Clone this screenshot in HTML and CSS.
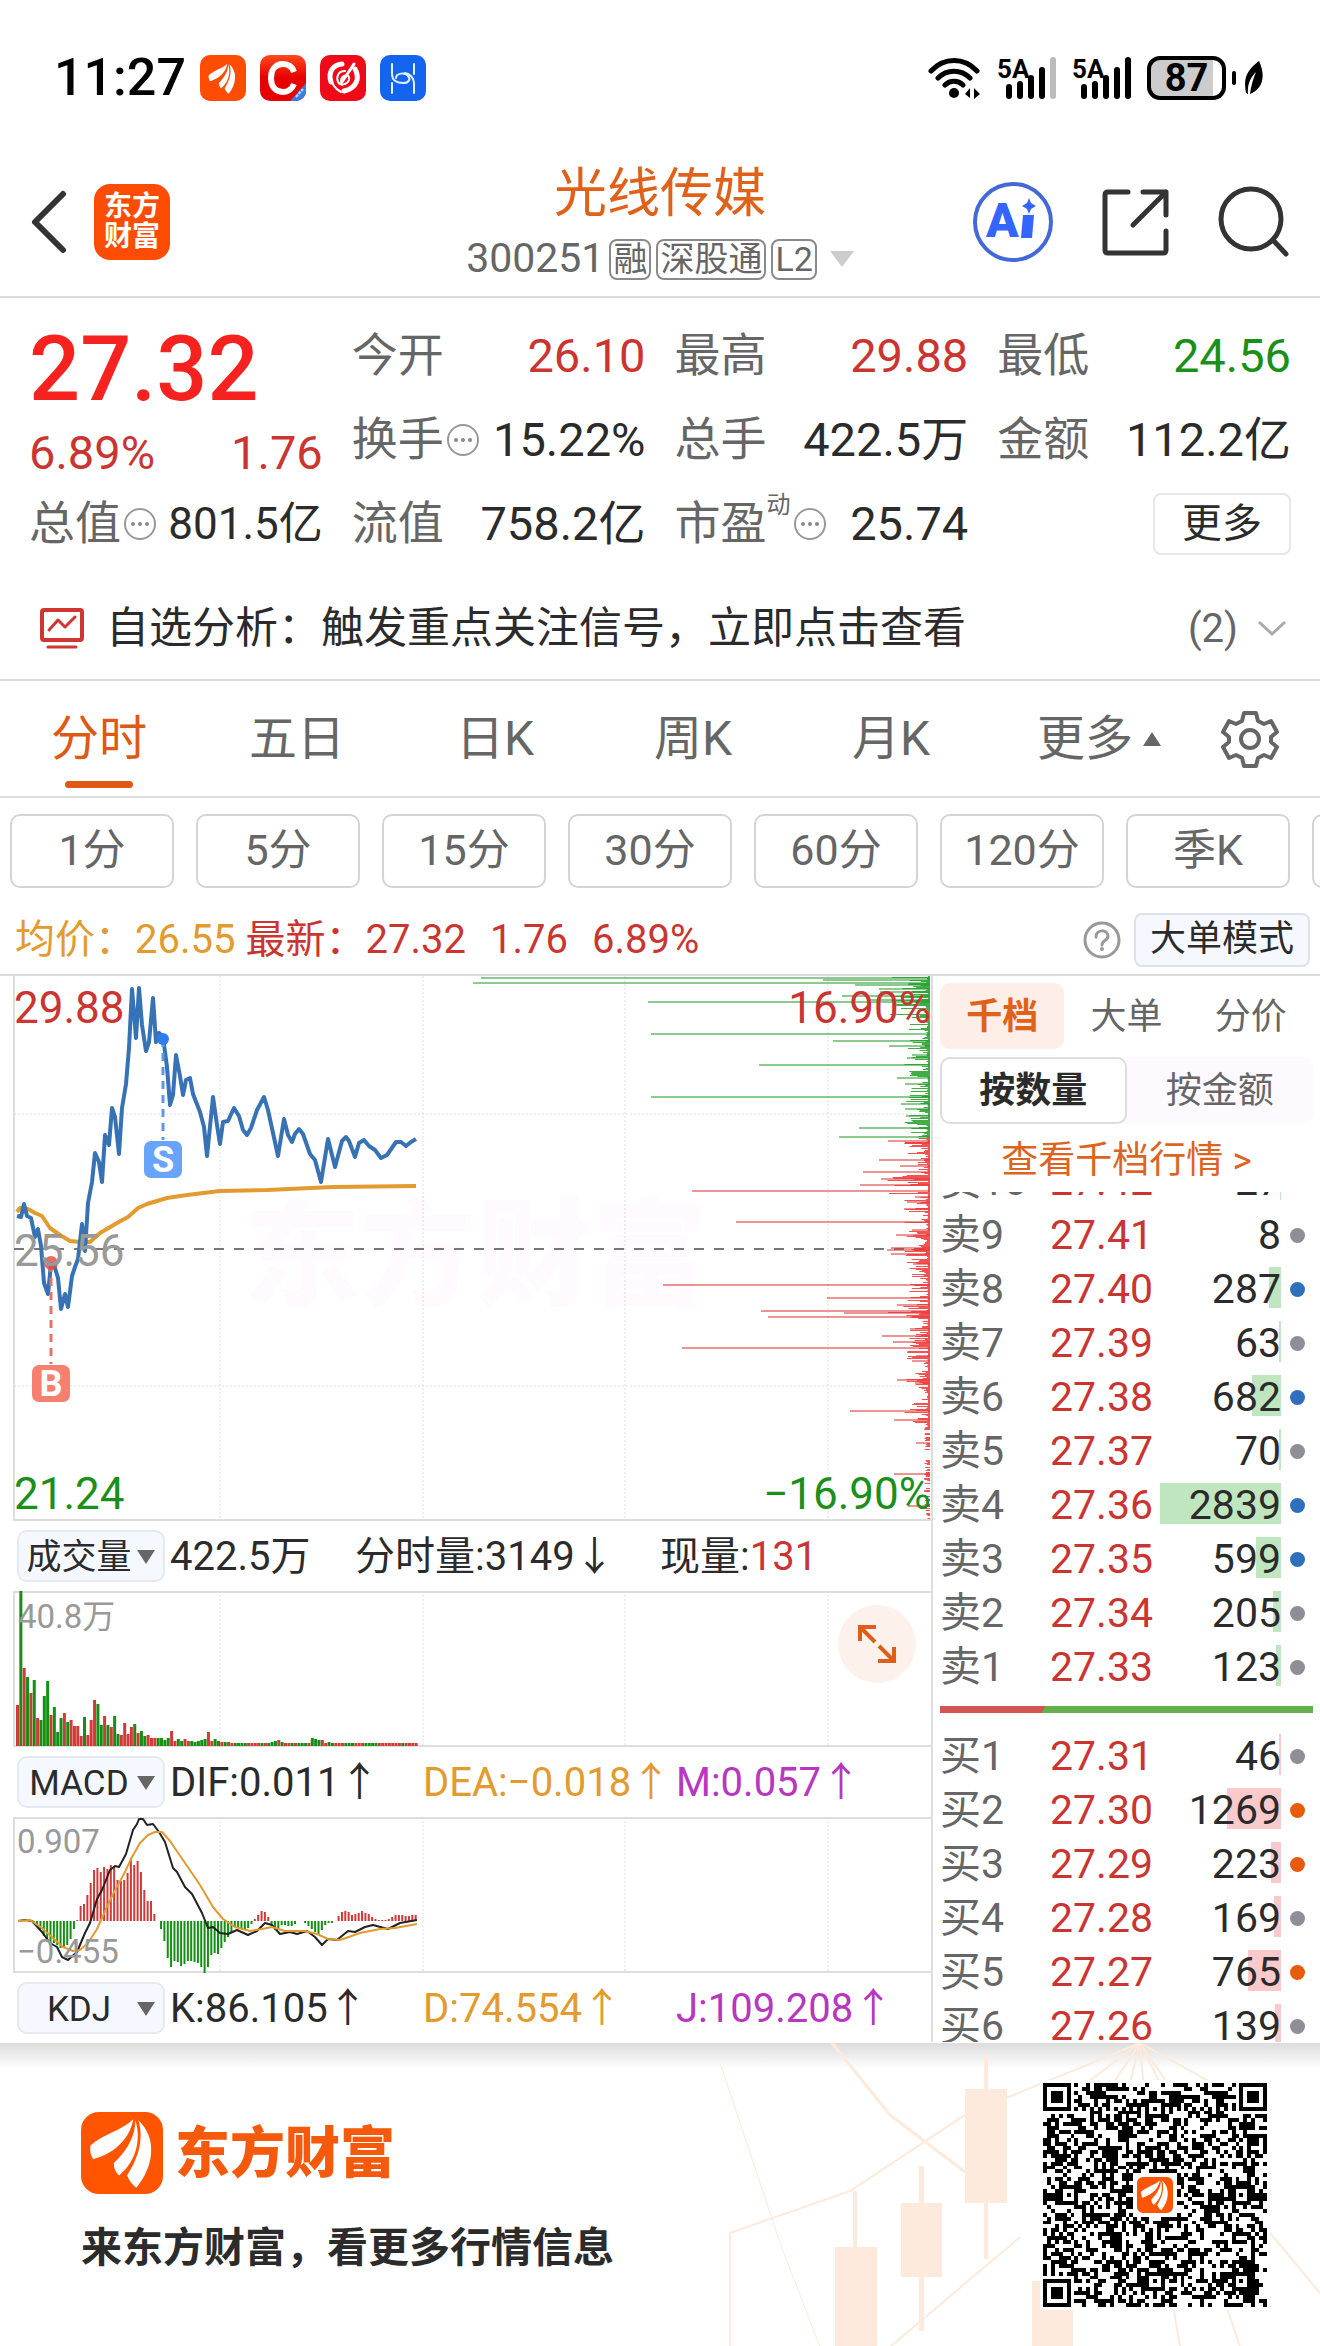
FILE: index.html
```html
<!DOCTYPE html>
<html lang="zh-CN">

<head>
    <meta charset="utf-8">
    <meta name="viewport" content="width=device-width, initial-scale=1">
    <title>光线传媒 300251</title>
    <link rel="stylesheet" href="styles.css">
</head>

<body>
    <svg class="defs" aria-hidden="true">
        <symbol id="feather" viewBox="0 0 80 80">
            <path d="M51 7C40 18 20 22 9 33c0 5 0 9 3 13 9-3 16-6 22-11C43 28 49 18 51 7z" />
            <path d="M53 8c0 15-7 28-21 42 0 5 2 9 5 12C51 51 60 30 53 8z" />
            <path d="M56 8c6 20-1 38-11 54 2 5 5 9 9 12C72 52 74 25 56 8z" />
        </symbol>
        <symbol id="dots" viewBox="0 0 34 34">
            <circle cx="17" cy="17" r="15" fill="none" stroke="#999" stroke-width="2" />
            <circle cx="10" cy="17" r="2" fill="#888" />
            <circle cx="17" cy="17" r="2" fill="#888" />
            <circle cx="24" cy="17" r="2" fill="#888" />
        </symbol>
    </svg>

    <div class="status-bar">
        <span class="clock">11:27</span>
        <div class="status-apps">
            <span class="app-icon app-em"><svg viewBox="0 0 80 80"><use href="#feather" x="8" y="10" width="62" height="62" /></svg></span>
            <span class="app-icon app-c">
                <svg viewBox="0 0 46 46">
                    <path d="M34 17c-2-6-6-8-11-8-8 0-12 6-12 14s4 14 12 14c5 0 9-3 11-8" fill="none" stroke="#fff" stroke-width="6" />
                    <path d="M46 28v18H30z" fill="#3b7de0" />
                    <path d="M36 42l7-8" stroke="#bcd6fb" stroke-width="2" stroke-dasharray="3 1" />
                </svg>
            </span>
            <span class="app-icon app-swirl">
                <svg viewBox="0 0 46 46" fill="none" stroke="#fff" stroke-linecap="round">
                    <path d="M22 9C12 10 8 18 11 27" stroke-width="5" />
                    <path d="M11 22c0 6 4 12 10 15" stroke-width="2" />
                    <path d="M35 14c5 9 2 19-11 22" stroke-width="5" />
                    <path d="M34 9L22 27" stroke-width="3" />
                    <path d="M25 16c-7 0-9 6-7 11 2 4 9 3 11-2 1-4-2-6-5-4-4 2-3 7-2 9" stroke-width="2" />
                </svg>
            </span>
            <span class="app-icon app-h">
                <svg viewBox="0 0 46 46" fill="none" stroke="#dff3ff" stroke-width="2" stroke-linecap="round">
                    <path d="M12 9v10c0 7 6 9 11 9 6 0 8-4 5-7-3-4-12-3-12 2" />
                    <path d="M12 38V28M34 9v10M34 38V28c0-5-4-9-9-10" />
                </svg>
            </span>
        </div>
        <div class="status-right">
            <svg width="54" height="44" viewBox="0 0 54 44" fill="none" stroke="#000" stroke-width="5" stroke-linecap="round">
                <path d="M3 15C16 1 36 1 49 15M10 22c9-9 23-9 32 0M17 29c5-5 13-5 18 0" />
                <circle cx="26" cy="37" r="5" fill="#000" stroke="none" />
                <path d="M37 38l5-6v10M46 43V32l6 6z" fill="#000" stroke="none" />
            </svg>
            <svg width="60" height="44" viewBox="0 0 60 44">
                <text x="0" y="22" class="net-label">5A</text>
                <path d="M12 31v9M23 28v12M34 22v18M45 14v26" stroke="#000" stroke-width="6" stroke-linecap="round" />
                <path d="M56 4v36" stroke="#bbb" stroke-width="6" stroke-linecap="round" />
            </svg>
            <svg width="60" height="44" viewBox="0 0 60 44">
                <text x="0" y="22" class="net-label">5A</text>
                <path d="M12 31v9M23 28v12M34 22v18M45 14v26M56 4v36" stroke="#000" stroke-width="6" stroke-linecap="round" />
            </svg>
            <span class="battery">87</span>
            <svg width="34" height="44" viewBox="0 0 34 44">
                <path d="M4 17v10" stroke="#000" stroke-width="4" stroke-linecap="round" />
                <path d="M29 5C17 14 13 22 16 37l2 1c-1-10 3-17 8-22-3 7-5 14-6 22 11-4 17-16 9-33z" />
            </svg>
        </div>
    </div>

    <header class="stock-header">
        <div class="header-side">
            <button class="icon-button" aria-label="返回">
                <svg width="40" height="66" viewBox="0 0 40 66" fill="none" stroke="#333" stroke-width="6" stroke-linecap="round" stroke-linejoin="round"><path d="M33 5L5 33l28 28" /></svg>
            </button>
            <a class="brand-badge" href="#">东方<br>财富</a>
        </div>
        <div class="header-title">
            <h1>光线传媒</h1>
            <div class="stock-code">
                <span>300251</span>
                <span class="tag">融</span>
                <span class="tag">深股通</span>
                <span class="tag">L2</span>
                <i class="code-arrow"></i>
            </div>
        </div>
        <div class="header-side header-actions">
            <button class="icon-button" aria-label="AI">
                <svg width="82" height="82" viewBox="0 0 82 82">
                    <circle cx="41" cy="41" r="38" fill="none" stroke="#4468d8" stroke-width="4" />
                    <text x="14" y="56" class="ai-label">A</text>
                    <path d="M51 34h11l-2 23H49z" fill="#3465ff" />
                    <path d="M57 17l2 5 5 3-5 3-2 5-2-5-5-3 5-3z" fill="#3465ff" />
                </svg>
            </button>
            <button class="icon-button" aria-label="分享">
                <svg width="70" height="70" viewBox="0 0 70 70" fill="none" stroke="#333" stroke-width="5" stroke-linecap="round" stroke-linejoin="round"><path d="M28 5H8q-3 0-3 3v55q0 3 3 3h55q3 0 3-3V44M43 5h23v23M66 5L33 38" /></svg>
            </button>
            <button class="icon-button" aria-label="搜索">
                <svg width="74" height="74" viewBox="0 0 74 74" fill="none" stroke="#333" stroke-width="5" stroke-linecap="round"><circle cx="35" cy="34" r="30" /><path d="M57 55l13 14" /></svg>
            </button>
        </div>
    </header>

    <main>
        <section class="quote">
            <div class="price-box">
                <div class="price">27.32</div>
                <div class="change"><span>6.89%</span><span>1.76</span></div>
            </div>
            <div class="cell"><span class="key">今开</span><span class="value up">26.10</span></div>
            <div class="cell"><span class="key">最高</span><span class="value up">29.88</span></div>
            <div class="cell"><span class="key">最低</span><span class="value down">24.56</span></div>
            <div class="cell"><span class="key">换手<svg class="dots"><use href="#dots" /></svg></span><span class="value">15.22%</span></div>
            <div class="cell"><span class="key">总手</span><span class="value">422.5万</span></div>
            <div class="cell"><span class="key">金额</span><span class="value">112.2亿</span></div>
            <div class="cell"><span class="key">总值<svg class="dots"><use href="#dots" /></svg></span><span class="value value-small">801.5亿</span></div>
            <div class="cell"><span class="key">流值</span><span class="value">758.2亿</span></div>
            <div class="cell"><span class="key">市盈<sup>动</sup><svg class="dots"><use href="#dots" /></svg></span><span class="value">25.74</span></div>
            <div class="cell cell-more"><button class="more-button">更多</button></div>
        </section>

        <a class="analysis" href="#">
            <svg width="44" height="42" viewBox="0 0 44 42" fill="none" stroke="#cf3632" stroke-width="4" stroke-linejoin="round" stroke-linecap="round"><rect x="2" y="2" width="40" height="30" rx="2" /><path d="M9 22l9-10 7 7 10-10" stroke-width="3" /><path d="M8 39h28" stroke-width="3" /></svg>
            <span class="analysis-text">自选分析：触发重点关注信号，立即点击查看</span>
            <span class="analysis-count">(2)</span>
            <svg width="28" height="18" viewBox="0 0 28 18" fill="none" stroke="#aaa" stroke-width="3"><path d="M1 2l13 12L27 2" /></svg>
        </a>

        <nav class="tabs">
            <button class="tab active">分时</button>
            <button class="tab">五日</button>
            <button class="tab">日K</button>
            <button class="tab">周K</button>
            <button class="tab">月K</button>
            <button class="tab">更多<i class="tab-arrow"></i></button>
            <button class="tab tab-gear" aria-label="设置">
                <svg width="58" height="58" viewBox="0 0 58 58" fill="none" stroke="#666" stroke-width="4" stroke-linejoin="round">
                    <path d="M23 3h12l2 8 6 3 7-3 6 11-6 5v5l6 5-6 11-7-3-6 3-2 8H23l-2-8-6-3-7 3-6-11 6-5v-5l-6-5 6-11 7 3 6-3z" />
                    <circle cx="29" cy="29" r="9" />
                </svg>
            </button>
        </nav>

        <div class="periods">
            <button>1分</button>
            <button>5分</button>
            <button>15分</button>
            <button>30分</button>
            <button>60分</button>
            <button>120分</button>
            <button>季K</button>
            <button aria-label="更多周期"></button>
        </div>

        <div class="summary">
            <span class="avg">均价：26.55</span>
            <span class="up latest"><span>最新：27.32</span><span>1.76</span><span>6.89%</span></span>
            <button class="icon-button" aria-label="帮助">
                <svg width="38" height="38" viewBox="0 0 38 38" fill="none" stroke="#999" stroke-width="3"><circle cx="19" cy="19" r="17" /><path d="M13 16c0-8 12-8 12-1 0 5-6 4-6 9" stroke-linecap="round" /><circle cx="19" cy="28" r="2" fill="#999" stroke="none" /></svg>
            </button>
            <button class="mode-button">大单模式</button>
        </div>

        <div class="board">
            <section class="charts">
                <svg class="chart" viewBox="0 0 931 545">
                    <text x="244" y="320" class="watermark">东方财富</text>
                    <path class="grid" d="M220 0v545M423 0v545M625 0v545M828 0v545M14 138h916M14 410h916" />
                    <path class="frame" d="M14 0v544h917" />
                    <path d="M14 273h916" stroke="#777" stroke-width="2" stroke-dasharray="10 10" />
                    <g id="depth"></g>
                    <polyline class="avg-line" points="17,236 20,232 28,233 35,237 42,240 50,252 60,259 70,265 80,266 90,266 100,257 117,247 128,241 138,232 147,228 167,222 187,219 220,215 267,214 333,211 416,210" />
                    <polyline class="price-line" points="17,240 21,241 24,228 27,240 31,242 35,261 38,253 41,270 44,307 48,318 51,288 55,292 58,302 61,333 65,318 68,331 72,300 75,291 78,283 82,248 85,275 88,227 92,206 95,177 99,186 102,206 105,159 109,169 112,132 115,141 119,178 122,132 126,108 129,72 132,13 136,62 139,12 142,49 146,75 149,66 153,22 156,66 159,57 163,61 167,91 170,129 173,119 176,79 180,100 183,119 186,104 190,102 193,118 200,136 204,151 207,180 213,121 217,149 220,168 223,146 228,145 234,132 239,140 243,154 247,159 251,152 257,134 264,121 268,134 278,180 284,143 288,159 292,166 295,158 299,153 303,158 310,178 315,184 321,206 328,163 335,191 342,165 346,161 349,165 355,181 359,167 364,164 369,170 375,174 381,182 387,179 396,166 401,166 406,170 411,166 416,163" />
                    <path d="M163 63v101" stroke="#5c98e8" stroke-width="3" stroke-dasharray="8 6" />
                    <circle cx="163" cy="63" r="6" fill="#2f7cf0" />
                    <path d="M51 288v100" stroke="#e27468" stroke-width="3" stroke-dasharray="8 6" />
                    <circle cx="51" cy="287" r="7" fill="#e2473f" opacity=".8" />
                    <rect x="144" y="165" width="38" height="37" rx="7" fill="#69a4fb" />
                    <text x="163" y="196" class="mark">S</text>
                    <rect x="32" y="389" width="38" height="37" rx="7" fill="#f6806f" />
                    <text x="51" y="420" class="mark">B</text>
                    <text x="14" y="47" class="axis axis-up">29.88</text>
                    <text x="14" y="290" class="axis axis-mid">25.56</text>
                    <text x="14" y="533" class="axis axis-down">21.24</text>
                    <text x="931" y="47" class="axis axis-up axis-end">16.90%</text>
                    <text x="931" y="533" class="axis axis-down axis-end">−16.90%</text>
                </svg>

                <div class="indicator">
                    <label class="picker"><select aria-label="成交量指标"><option>成交量</option></select></label>
                    <div class="readings readings-vol">
                        <span>422.5万</span><span>分时量:3149↓</span><span>现量:<span class="up">131</span></span>
                    </div>
                </div>
                <div class="chart-box">
                    <svg class="chart" viewBox="0 0 931 156">
                        <path class="grid" d="M220 0v156M423 0v156M625 0v156M828 0v156" />
                        <path class="frame" d="M931 1H14v154h917" />
                        <g id="volume"></g>
                        <text x="18" y="37" class="scale">40.8万</text>
                    </svg>
                    <button class="expand" aria-label="放大">
                        <svg width="40" height="40" viewBox="0 0 40 40" fill="none" stroke="#dd5f1c" stroke-width="4"><path d="M3 17V3h16M4 4l14 14M37 23v14H21M36 36L22 22" /></svg>
                    </button>
                </div>

                <div class="indicator">
                    <label class="picker"><select aria-label="MACD指标"><option>MACD</option></select></label>
                    <div class="readings">
                        <span>DIF:0.011↑</span><span class="avg">DEA:−0.018↑</span><span class="purple">M:0.057↑</span>
                    </div>
                </div>
                <svg class="chart" viewBox="0 0 931 156">
                    <path class="grid" d="M220 0v156M423 0v156M625 0v156M828 0v156" />
                    <path class="frame" d="M931 1H14v154h917" />
                    <g id="macd"></g>
                    <polyline class="thin" stroke="#222" points="18,104 25,103 32,104 42,115 50,126 57,130 62,140 68,143 77,135 85,116 90,106 97,82 102,73 110,53 115,49 119,50 126,37 133,13 137,7 139,2 143,2 147,8 153,7 159,15 165,25 173,51 177,55 185,70 192,77 202,96 208,111 213,110 220,116 228,117 237,113 248,118 257,114 265,106 272,108 280,117 290,115 297,117 307,114 315,120 322,128 328,122 337,123 348,114 355,115 365,110 373,108 388,112 400,106 417,103" />
                    <polyline class="thin" stroke="#e39a2e" points="18,104 30,103 42,111 53,121 63,130 73,134 80,133 88,126 97,112 106,92 114,75 124,57 132,40 140,26 148,18 155,15 162,15 170,24 183,43 200,68 213,90 223,102 235,110 250,114 262,112 272,110 285,114 305,114 317,117 328,122 340,123 360,116 380,112 395,111 417,107" />
                    <text x="17" y="36" class="scale">0.907</text>
                    <text x="17" y="146" class="scale">−0.455</text>
                </svg>

                <div class="indicator">
                    <label class="picker"><select aria-label="KDJ指标"><option>KDJ</option></select></label>
                    <div class="readings">
                        <span>K:86.105↑</span><span class="avg">D:74.554↑</span><span class="purple">J:109.208↑</span>
                    </div>
                </div>
            </section>

            <aside class="orders">
                <div class="order-tabs">
                    <button class="active">千档</button>
                    <button>大单</button>
                    <button>分价</button>
                </div>
                <div class="order-switch">
                    <button class="active">按数量</button>
                    <button>按金额</button>
                </div>
                <a class="order-link" href="#">查看千档行情 &gt;</a>
                <div class="book">
                    <table class="sells">
                        <tr><th>卖10</th><td class="up">27.42</td><td class="qty"><i style="width: 1%"></i>27</td><td><b class="dot"></b></td></tr>
                        <tr><th>卖9</th><td class="up">27.41</td><td class="qty">8</td><td><b class="dot"></b></td></tr>
                        <tr><th>卖8</th><td class="up">27.40</td><td class="qty"><i style="width: 10%"></i>287</td><td><b class="dot blue"></b></td></tr>
                        <tr><th>卖7</th><td class="up">27.39</td><td class="qty"><i style="width: 2%"></i>63</td><td><b class="dot"></b></td></tr>
                        <tr><th>卖6</th><td class="up">27.38</td><td class="qty"><i style="width: 24%"></i>682</td><td><b class="dot blue"></b></td></tr>
                        <tr><th>卖5</th><td class="up">27.37</td><td class="qty"><i style="width: 2%"></i>70</td><td><b class="dot"></b></td></tr>
                        <tr><th>卖4</th><td class="up">27.36</td><td class="qty"><i style="width: 100%"></i>2839</td><td><b class="dot blue"></b></td></tr>
                        <tr><th>卖3</th><td class="up">27.35</td><td class="qty"><i style="width: 21%"></i>599</td><td><b class="dot blue"></b></td></tr>
                        <tr><th>卖2</th><td class="up">27.34</td><td class="qty"><i style="width: 7%"></i>205</td><td><b class="dot"></b></td></tr>
                        <tr><th>卖1</th><td class="up">27.33</td><td class="qty"><i style="width: 4%"></i>123</td><td><b class="dot"></b></td></tr>
                    </table>
                    <div class="ratio"></div>
                    <table class="buys">
                        <tr><th>买1</th><td class="up">27.31</td><td class="qty"><i style="width: 2%"></i>46</td><td><b class="dot"></b></td></tr>
                        <tr><th>买2</th><td class="up">27.30</td><td class="qty"><i style="width: 45%"></i>1269</td><td><b class="dot orange"></b></td></tr>
                        <tr><th>买3</th><td class="up">27.29</td><td class="qty"><i style="width: 8%"></i>223</td><td><b class="dot orange"></b></td></tr>
                        <tr><th>买4</th><td class="up">27.28</td><td class="qty"><i style="width: 6%"></i>169</td><td><b class="dot"></b></td></tr>
                        <tr><th>买5</th><td class="up">27.27</td><td class="qty"><i style="width: 27%"></i>765</td><td><b class="dot orange"></b></td></tr>
                        <tr><th>买6</th><td class="up">27.26</td><td class="qty"><i style="width: 5%"></i>139</td><td><b class="dot"></b></td></tr>
                    </table>
                </div>
            </aside>
        </div>
    </main>

    <footer class="promo">
        <svg class="promo-bg" viewBox="0 0 620 304" aria-hidden="true">
            <g fill="none" stroke="#fdeadb" stroke-width="3">
                <path d="M132 0l58 72 75 57" />
                <path d="M20 20l60 180 40 104" stroke-width="1" />
                <path d="M30 190l120-42 115-76 175-72M190 304l130-110" stroke-width="2" />
                <path d="M30 304V190M440 0l-80 60M440 0l-40 60M440 0l-15 60M440 0l5 60M440 0l30 60M440 0l90 50M440 0l130 190 50 60M480 304l-10-60M540 304l-20-60" stroke-width="2" />
            </g>
            <g fill="#fdeadd">
                <path d="M265 46h42v114h-42zM284 13h4v203h-4zM201 160h41v74h-41zM219 123h5v165h-5zM135 204h42v100h-42zM153 148h4v60h-4zM332 238h41v66h-41zM350 140h4v100h-4z" />
            </g>
        </svg>
        <div class="promo-text">
            <div class="promo-logo">
                <span class="logo-mark"><svg viewBox="0 0 80 80"><use href="#feather" /></svg></span>
                <span class="logo-name">东方财富</span>
            </div>
            <p>来东方财富，看更多行情信息</p>
        </div>
        <div class="qr">
            <svg id="qr" viewBox="0 0 57 57" role="img" aria-label="二维码"></svg>
            <span class="logo-mark"><svg viewBox="0 0 80 80"><use href="#feather" /></svg></span>
        </div>
    </footer>
    <script src="charts.js"></script>
</body>

</html>
```

FILE: styles.css
```css
* {
    box-sizing: border-box;
}

body {
    margin: 0;
    background: #fff;
    color: #2b2b2b;
    font-family: Roboto, "Noto Sans CJK SC", sans-serif;
    font-size: 40px;
    line-height: 1.2;
}

button,
select {
    margin: 0;
    padding: 0;
    border: 0;
    background: none;
    color: inherit;
    font: inherit;
}

a {
    color: inherit;
    text-decoration: none;
}

svg {
    display: block;
    flex: none;
}

.defs {
    position: absolute;
    width: 0;
    height: 0;
}

.up {
    color: #cb3531;
}

.down {
    color: #1a8f1a;
}

.avg {
    color: #e39a2e;
}

.purple {
    color: #b936c0;
}

.icon-button {
    display: flex;
}

/* status bar */
.status-bar {
    display: flex;
    align-items: center;
    height: 156px;
    padding: 0 56px 0 54px;
}

.clock {
    width: 146px;
    font-size: 52px;
    font-weight: 500;
    color: #000;
}

.status-apps {
    display: flex;
    gap: 14px;
    flex: 1;
}

.app-icon {
    width: 46px;
    height: 46px;
    border-radius: 10px;
    overflow: hidden;
}

.app-em {
    background: #ff4c05;
    fill: #fff;
}

.app-c {
    background: linear-gradient(#ff4a1c, #e60000 50%);
}

.app-swirl {
    background: #f00918;
}

.app-h {
    background: #1464f0;
}

.status-right {
    display: flex;
    align-items: center;
    gap: 15px;
}

.net-label {
    font-size: 26px;
    font-weight: 700;
}

.battery {
    width: 79px;
    height: 44px;
    border: 4px solid #000;
    border-radius: 13px;
    background: linear-gradient(90deg, #ccc 88%, #fff 88%);
    color: #000;
    font-size: 38px;
    font-weight: 700;
    line-height: 37px;
    text-align: center;
}

.battery + svg {
    margin-left: -11px;
}

/* stock header */
.stock-header {
    display: grid;
    grid-template-columns: 1fr auto 1fr;
    align-items: center;
    height: 142px;
    padding: 0 30px 8px;
    border-bottom: 2px solid #ddd;
}

.header-side {
    display: flex;
    align-items: center;
    gap: 24px;
}

.header-actions {
    justify-content: flex-end;
    gap: 46px;
}

.brand-badge {
    width: 76px;
    height: 76px;
    padding-top: 8px;
    border-radius: 16px;
    background: #ff4c05;
    color: #fff;
    font-size: 28px;
    font-weight: 700;
    line-height: 30px;
    text-align: center;
}

.header-title h1 {
    margin: 0;
    color: #e0611a;
    font-size: 53px;
    font-weight: 400;
    line-height: 74px;
    text-align: center;
}

.stock-code {
    display: flex;
    align-items: center;
    gap: 5px;
    height: 56px;
    color: #666;
    font-size: 41px;
}

.tag {
    padding: 0 2px;
    border: 2px solid #8a8a8a;
    border-radius: 8px;
    font-size: 34px;
    line-height: 37px;
}

.code-arrow {
    margin-left: 8px;
    border: 12px solid transparent;
    border-top: 16px solid #ccc;
    border-bottom: 0;
}

.ai-label {
    fill: #3465ff;
    font-size: 48px;
    font-weight: 900;
}

/* quote figures */
.quote {
    display: grid;
    grid-template-columns: repeat(4, 1fr);
    grid-auto-rows: 84px;
    column-gap: 29px;
    padding: 16px 29px 12px;
    font-size: 46px;
}

.price-box {
    grid-row: span 2;
    padding-top: 4px;
}

.price {
    color: #f5221f;
    font-size: 90px;
    font-weight: 500;
    line-height: 104px;
}

.change {
    display: flex;
    justify-content: space-between;
    color: #cb3531;
    font-size: 47px;
    line-height: 62px;
}

.cell {
    display: flex;
    align-items: center;
    justify-content: space-between;
    white-space: nowrap;
}

.key {
    display: flex;
    align-items: center;
    color: #666;
}

.key sup {
    align-self: flex-start;
    font-size: 24px;
    line-height: 18px;
}

.value {
    font-size: 47px;
}

.value-small {
    font-size: 44px;
}

.dots {
    width: 34px;
    height: 34px;
    margin-left: 2px;
}

.cell-more {
    justify-content: flex-end;
}

.more-button {
    width: 138px;
    height: 62px;
    border: 2px solid #e8e8e8;
    border-radius: 8px;
    font-size: 40px;
}

.analysis {
    display: flex;
    align-items: center;
    height: 103px;
    padding: 0 34px 0 40px;
    border-bottom: 2px solid #ddd;
}

.analysis-text {
    flex: 1;
    margin-left: 22px;
    font-size: 43px;
}

.analysis-count {
    margin-right: 20px;
    color: #666;
}

/* chart period tabs */
.tabs {
    display: grid;
    grid-template-columns: repeat(5, 10fr) 11fr 84px;
    height: 117px;
    padding-right: 28px;
    border-bottom: 2px solid #ddd;
    color: #666;
    font-size: 48px;
}

.tab {
    position: relative;
    display: flex;
    align-items: center;
    justify-content: center;
}

.tab.active {
    color: #de5a14;
}

.tab.active::after {
    content: "";
    position: absolute;
    bottom: 8px;
    width: 68px;
    height: 7px;
    border-radius: 4px;
    background: #de5a14;
}

.tab-arrow {
    margin-left: 10px;
    border: 9px solid transparent;
    border-top: 0;
    border-bottom: 14px solid #666;
}

.periods {
    display: flex;
    gap: 22px;
    padding: 16px 10px 0;
    overflow: hidden;
    color: #666;
    font-size: 43px;
}

.periods button {
    flex: none;
    width: 164px;
    height: 74px;
    border: 2px solid #d4d4d4;
    border-radius: 10px;
}

.summary {
    display: flex;
    align-items: center;
    height: 88px;
    padding: 18px 10px 0 15px;
    border-bottom: 2px solid #ddd;
    font-size: 40px;
}

.latest {
    display: flex;
    gap: 24px;
    flex: 1;
    margin-left: 10px;
}

.mode-button {
    width: 176px;
    height: 54px;
    margin-left: 13px;
    border: 2px solid #dde1e8;
    border-radius: 8px;
    background: #f5f9ff;
    font-size: 36px;
}

/* charts */
.board {
    display: grid;
    grid-template-columns: 931fr 389fr;
    align-items: start;
}

.chart {
    width: 100%;
    height: auto;
}

.chart-box {
    position: relative;
}

.grid {
    fill: none;
    stroke: #ddd;
    stroke-dasharray: 2 2;
}

.frame {
    fill: none;
    stroke: #ddd;
    stroke-width: 2;
}

.watermark {
    fill: #fffafe;
    font-size: 116px;
    font-weight: 900;
}

.price-line,
.avg-line,
.thin {
    fill: none;
    stroke-width: 4;
    stroke-linejoin: round;
}

.price-line {
    stroke: #3672b4;
}

.avg-line {
    stroke: #e39a2e;
}

.thin {
    stroke-width: 2;
}

.mark {
    fill: #fff;
    font-size: 36px;
    font-weight: 700;
    text-anchor: middle;
}

.axis {
    font-size: 44px;
}

.axis-up {
    fill: #cb3531;
}

.axis-mid {
    fill: #999;
}

.axis-down {
    fill: #1a8f1a;
}

.axis-end {
    text-anchor: end;
}

.scale {
    fill: #999;
    font-size: 33px;
}

.expand {
    position: absolute;
    top: 14px;
    right: 15px;
    display: flex;
    align-items: center;
    justify-content: center;
    width: 78px;
    height: 78px;
    border-radius: 50%;
    background: #fdf1ec;
}

.indicator {
    display: flex;
    align-items: center;
    height: 70px;
    padding-left: 17px;
}

.picker {
    position: relative;
    width: 148px;
    height: 52px;
    border: 2px solid #e6e9ef;
    border-radius: 10px;
    background: #f5f9ff;
}

.picker select {
    width: 100%;
    height: 100%;
    padding-right: 24px;
    appearance: none;
    font-size: 35px;
    text-align-last: center;
}

.picker::after {
    content: "";
    position: absolute;
    top: 18px;
    right: 8px;
    border: 9px solid transparent;
    border-top: 14px solid #666;
    border-bottom: 0;
}

.readings {
    display: grid;
    grid-template-columns: 253px 253px 1fr;
    flex: 1;
    padding: 2px 0 0 5px;
    white-space: nowrap;
}

.readings-vol {
    grid-template-columns: 185px 305px 1fr;
}

/* order book */
.orders {
    display: flex;
    flex-direction: column;
    height: 1066px;
    padding: 7px 7px 0;
    border-left: 2px solid #ddd;
    color: #666;
    font-size: 36px;
}

.orders button {
    padding-top: 3px;
}

.order-tabs {
    display: grid;
    grid-template-columns: repeat(3, 1fr);
    height: 66px;
}

.order-tabs .active {
    border-radius: 10px;
    background: #fdeee7;
    color: #e0611a;
    font-weight: 700;
}

.order-switch {
    display: grid;
    grid-template-columns: 1fr 1fr;
    height: 67px;
    margin-top: 8px;
    border-radius: 10px;
    background: #fdf9fe;
}

.order-switch .active {
    border: 2px solid #ddd;
    border-radius: 10px;
    background: #fff;
    color: #2b2b2b;
    font-weight: 700;
}

.order-link {
    height: 68px;
    color: #dd6420;
    font-size: 37px;
    line-height: 74px;
    text-align: center;
}

.book {
    flex: 1;
    min-height: 0;
    overflow: hidden;
    font-size: 41px;
}

.book table {
    width: 100%;
    border-collapse: collapse;
    table-layout: fixed;
    line-height: 54px;
}

/* the list is scrolled, so its top row is cut */
.sells {
    margin-top: -38px;
}

.book th,
.book td {
    width: 110px;
    height: 54px;
    padding: 0;
    font-weight: 400;
    text-align: left;
}

.book td:nth-child(3) {
    width: auto;
}

.book td:last-child {
    width: 32px;
}

.book .qty {
    position: relative;
    color: #2b2b2b;
    text-align: right;
}

.qty i {
    position: absolute;
    top: 5px;
    right: 0;
    z-index: -1;
    height: 41px;
    background: #c0e6c0;
}

.buys .qty i {
    background: #fac9cc;
}

.dot {
    display: block;
    width: 15px;
    height: 15px;
    margin: 0 auto;
    border-radius: 50%;
    background: #8e8e96;
}

.dot.blue {
    background: #2f70bd;
}

.dot.orange {
    background: #e85a0c;
}

.ratio {
    height: 7px;
    margin: 12px 0 16px;
    background: linear-gradient(120deg, #d25552 28%, #64b04e 28%);
}

/* footer */
.promo {
    position: relative;
    display: flex;
    align-items: center;
    justify-content: space-between;
    height: 304px;
    padding: 0 50px 0 81px;
    background: linear-gradient(#dcdcdc, #fff 26px);
}

.promo-bg {
    position: absolute;
    top: 0;
    right: 0;
    height: 100%;
}

.promo-text {
    position: relative;
}

.promo-logo {
    display: flex;
    align-items: center;
    gap: 12px;
}

.logo-mark {
    display: block;
    width: 82px;
    height: 82px;
    border-radius: 18px;
    background: #ff5500;
    fill: #fff;
}

.logo-name {
    color: #f5590c;
    font-size: 55px;
    font-weight: 900;
    line-height: 84px;
}

.promo-text p {
    margin: 22px 0 0;
    font-size: 41px;
    font-weight: 700;
    line-height: 62px;
}

.qr {
    position: relative;
    width: 230px;
    padding: 3px;
    background: #fff;
}

.qr .logo-mark {
    position: absolute;
    top: 95px;
    left: 95px;
    width: 40px;
    height: 40px;
    border: 2px solid #fff;
    border-radius: 8px;
}
```

FILE: charts.js
```js
var RED = "#d23a3a";
var GREEN = "#139013";
var STEP = 3.35;

function bar(x, y, w, h, color, opacity) {
    return '<rect x="' + x + '" y="' + y + '" width="' + w + '" height="' + h + '" fill="' + color + '" opacity="' + (opacity || 1) + '"/>';
}

function fill(id, html) {
    document.getElementById(id).innerHTML = html;
}

var seed = 7;
function rand() {
    seed = (seed * 16807) % 2147483647;
    return seed / 2147483647;
}

// resting orders by price: [y, left edge]
var orders = [
    [1, 481], [3, 823], [6, 473], [8, 855], [12, 879], [15, 880], [19, 842], [23, 870], [25, 648], [57, 651], [64, 833], [69, 889],
    [78, 912], [81, 907], [88, 759], [101, 897], [107, 905], [120, 651], [127, 901], [132, 905], [139, 906], [151, 859], [160, 839],
    [164, 888], [166, 905], [183, 879], [189, 900], [195, 863], [202, 881], [208, 860], [214, 692], [220, 915], [225, 907], [232, 904],
    [245, 736], [253, 912], [258, 896], [271, 891], [273, 887], [277, 891], [287, 913], [308, 663], [321, 827], [328, 897], [334, 761],
    [336, 844], [340, 768], [352, 910], [359, 882], [365, 893], [371, 682], [379, 916], [384, 912], [403, 897], [406, 915],
    [434, 850], [443, 894], [466, 916], [497, 894], [529, 908]
];

function drawDepth() {
    var html = "";
    orders.forEach(function (o) {
        html += bar(o[1], o[0], 930 - o[1], 2, o[0] < 162 ? "#2f9e33" : "#df3d3d", 0.55);
    });
    for (var y = 0; y < 543; y += 1) {
        var dense = y < 40 || (y > 196 && y < 220) || (y > 325 && y < 345);
        var w = 2 + Math.pow(rand(), 3) * (dense ? 46 : 24);
        if (y > 450) {
            w = rand() > 0.5 ? 2 + rand() * 4 : 0;
        }
        html += bar(930 - w, y, w, 1, y < 162 ? "#1fa024" : "#f03434", 0.85);
    }
    fill("depth", html);
}

// negative value: the minute closed lower
var volume = [
    41, -155, 78, -69, 53, -66, 28, -26, -50, -65, 31, -39, -14, -28, 33, -24, 26, 20, 20, 10, -29, 11, 26, 46, -42, -21, 30, -21, 19,
    -30, -12, 11, 23, 12, 19, -22, 13, -15, -10, 11, 8, 8, -8, -8, -6, -8, 15, 5, -7, -5, 7, 5, -5, -4, -5, -6, -7, 14, 5, -7, -5, 4,
    -4, 4, 3, -3, -3, -3, -3, 3, 3, 3, 3, -3, 3, -3, -4, -5, 6, -4, 3, 3, -3, 3, -3, -3, -3, 3, -8, -7, -6, 6, 3, -4, -3, 3, 3, 3, -3,
    -3, -3, 3, 3, 3, -3, -3, -3, -3, 3, 3, 3, 3, 3, 3, 3, -3, 3, 3, 3, 3
];

function drawVolume() {
    fill("volume", volume.map(function (v, i) {
        var h = Math.abs(v);
        return bar(16 + i * STEP, 155 - h, 3, h, v > 0 ? RED : GREEN);
    }).join(""));
}

var macd = [
    0, 0, 0, 0, 0, -3, -6, -8, -15, -20, -24, -22, -24, -27, -26, -24, -18, -8, 1, 15, 17, 26, 38, 51, 53, 49, 54, 52, 56, 54, 41, 40,
    41, 48, 63, 56, 60, 49, 31, 20, 20, 7, 0, -8, -20, -37, -46, -40, -41, -45, -43, -40, -40, -41, -42, -46, -52, -46, -34, -32, -33,
    -27, -21, -16, -11, -6, -7, -8, -9, -7, -3, 2, 6, 10, 9, 4, -3, -9, -9, -4, -4, -5, -5, -3, 0, 0, -2, -5, -8, -11, -14, -9, -4,
    -2, -2, 0, 5, 9, 10, 9, 6, 7, 8, 10, 8, 7, 4, 2, 1, 1, 1, 2, 4, 6, 6, 6, 5, 5, 6, 6
];

function drawMacd() {
    fill("macd", macd.map(function (v, i) {
        return bar(16 + i * STEP, v > 0 ? 104 - v : 104, 2, Math.abs(v), v > 0 ? RED : GREEN);
    }).join(""));
}

function drawQr() {
    var n = 57, cells = [], x, y;
    for (y = 0; y < n; y++) {
        cells[y] = [];
        for (x = 0; x < n; x++) {
            cells[y][x] = rand() > 0.5;
        }
    }
    function rings(cx, cy, r, test) {
        for (var dy = -r; dy <= r; dy++) {
            for (var dx = -r; dx <= r; dx++) {
                if (cells[cy + dy] && cx + dx >= 0 && cx + dx < n) {
                    cells[cy + dy][cx + dx] = test(Math.max(Math.abs(dx), Math.abs(dy)));
                }
            }
        }
    }
    for (x = 8; x < n - 8; x++) {
        cells[6][x] = cells[x][6] = x % 2 === 0;
    }
    [[28, 6], [6, 28], [50, 28], [28, 50], [50, 50]].forEach(function (p) {
        rings(p[0], p[1], 2, function (d) { return d !== 1; });
    });
    [[3, 3], [53, 3], [3, 53]].forEach(function (p) {
        rings(p[0], p[1], 4, function (d) { return d !== 2 && d !== 4; });
    });
    rings(28, 28, 5, function () { return false; });
    var d = "";
    for (y = 0; y < n; y++) {
        for (x = 0; x < n; x++) {
            if (cells[y][x]) {
                d += "M" + x + " " + y + "h1v1h-1z";
            }
        }
    }
    fill("qr", '<path shape-rendering="crispEdges" d="' + d + '"/>');
}

drawDepth();
drawVolume();
drawMacd();
drawQr();
```
